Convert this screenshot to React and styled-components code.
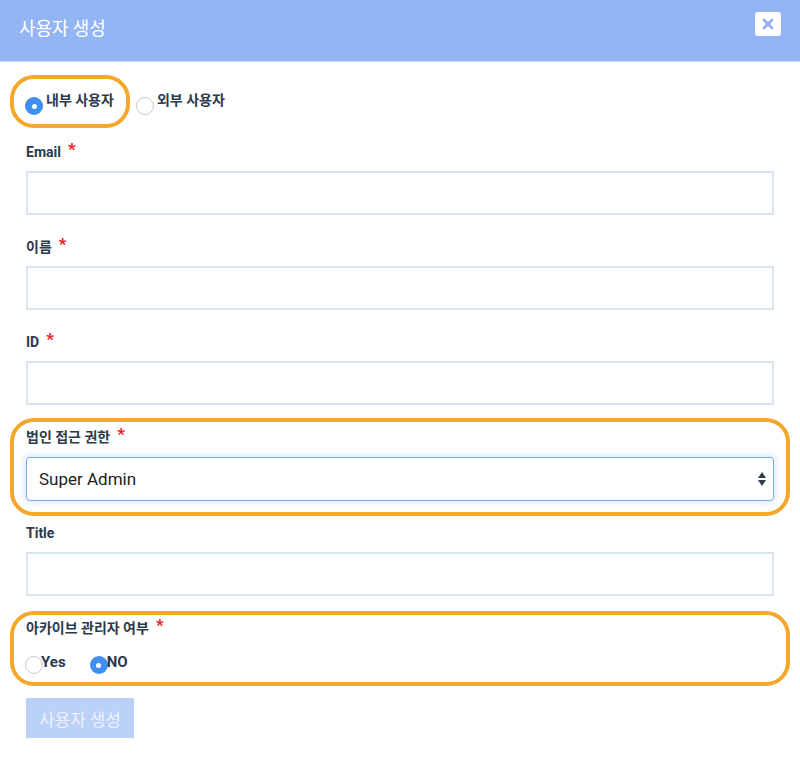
import styled, { createGlobalStyle } from "styled-components";

const Global = createGlobalStyle`
  body {
    margin: 0;
    background: #fff;
    font-family: Roboto, "Noto Sans CJK KR", sans-serif;
  }
`;

const Modal = styled.div`
  width: 800px;
  min-height: 783px;
  background: #fff;
`;

const Header = styled.div`
  height: 61px;
  background: #93b5f4;
  border-bottom: 1px solid #d3ddf0;
  display: flex;
  justify-content: space-between;
  align-items: flex-start;
  padding: 0 19px;
  box-sizing: content-box;
`;

const Title = styled.h2`
  margin: 15px 0 0;
  font-family: "Noto Sans CJK KR", sans-serif;
  font-size: 18px;
  font-weight: 400;
  color: #fff;
  line-height: 24px;
`;

const CloseButton = styled.button`
  margin-top: 12px;
  width: 26px;
  height: 24px;
  border: none;
  border-radius: 3px;
  background: #fff;
  display: flex;
  align-items: center;
  justify-content: center;
  padding: 0;
`;

const Body = styled.div`
  padding: 33px 26px 40px;
`;

const Highlight = styled.div`
  position: relative;
  &::after {
    content: "";
    position: absolute;
    top: ${(p) => p.$top}px;
    bottom: ${(p) => p.$bottom}px;
    left: -16px;
    right: -16px;
    border: 4px solid #f5a72a;
    border-radius: 24px;
    pointer-events: none;
  }
`;

const RadioRow = styled.div`
  display: flex;
  align-items: center;
  gap: ${(p) => p.$gap}px;
  margin-bottom: ${(p) => p.$mb || 0}px;
`;

const RadioItem = styled.label`
  display: flex;
  align-items: center;
  gap: ${(p) => p.$gap || 0}px;
  font-family: Roboto, "Noto Sans CJK KR", sans-serif;
  font-size: ${(p) => p.$size || 14}px;
  font-weight: 700;
  color: #2c3a4b;
  line-height: 18px;
`;

const RadioText = styled.span`
  position: relative;
  top: ${(p) => p.$lift || 0}px;
  margin-left: ${(p) => p.$ml || 0}px;
`;

const RadioDot = styled.span`
  width: 18px;
  height: 18px;
  border-radius: 50%;
  box-sizing: border-box;
  flex: none;
  position: relative;
  top: ${(p) => p.$drop || 0}px;
  background: ${(p) => (p.$checked ? "#3d8ff2" : "#fff")};
  border: ${(p) => (p.$checked ? "none" : "1.5px solid #c9c9c9")};
  display: flex;
  align-items: center;
  justify-content: center;
  &::after {
    content: "";
    display: ${(p) => (p.$checked ? "block" : "none")};
    width: 5px;
    height: 5px;
    border-radius: 50%;
    background: #fff;
  }
`;

const Group = styled.div`
  margin-bottom: ${(p) => (p.$mb === undefined ? 22 : p.$mb)}px;
`;

const Label = styled.div`
  font-family: Roboto, "Noto Sans CJK KR", sans-serif;
  font-size: 14px;
  font-weight: 700;
  color: #2c3a4b;
  line-height: 20px;
  margin-bottom: ${(p) => p.$mb || 9}px;
  display: flex;
  align-items: flex-start;
`;

const Required = styled.span`
  color: #f01c1c;
  font-size: 17px;
  margin-left: 7px;
  line-height: 14px;
`;

const Input = styled.input`
  display: block;
  width: 100%;
  height: 44px;
  box-sizing: border-box;
  border: 2px solid #dbe3ec;
  background: #fff;
  outline: none;
`;

const SelectBox = styled.div`
  height: 44px;
  box-sizing: border-box;
  border: 1px solid #70a9ec;
  border-radius: 4px;
  box-shadow: 0 0 6px 2px rgba(120, 170, 240, 0.25);
  display: flex;
  align-items: center;
  justify-content: space-between;
  padding: 0 6px 0 12px;
  font-family: Roboto, sans-serif;
  font-size: 17px;
  color: #222;
`;

const SubmitButton = styled.button`
  width: 108px;
  height: 40px;
  border: none;
  background: #bcd1f7;
  color: #eef3fe;
  font-family: "Noto Sans CJK KR", sans-serif;
  font-size: 17px;
  padding: 0;
`;

function Field({ label, required, mb }) {
  return (
    <Group $mb={mb}>
      <Label>
        {label}
        {required && <Required>*</Required>}
      </Label>
      <Input />
    </Group>
  );
}

export default function App() {
  return (
    <Modal>
      <Global />
      <Header>
        <Title>사용자 생성</Title>
        <CloseButton>
          <svg width="12" height="12" viewBox="0 0 12 12">
            <path d="M2 2L10 10M10 2L2 10" stroke="#8fb0ef" strokeWidth="2.6" strokeLinecap="round" />
          </svg>
        </CloseButton>
      </Header>
      <Body>
        <RadioRow $gap={22} $mb={29}>
          <Highlight $top={-20} $bottom={-15}>
            <RadioItem $gap={3}>
              <RadioDot $checked $drop={2} style={{ marginLeft: -1 }} />
              <RadioText $lift={-4}>내부 사용자</RadioText>
            </RadioItem>
          </Highlight>
          <RadioItem $gap={3}>
            <RadioDot $drop={2} />
            <RadioText $lift={-4}>외부 사용자</RadioText>
          </RadioItem>
        </RadioRow>

        <Field label="Email" required />
        <Field label="이름" required />
        <Field label="ID" required />

        <Highlight $top={-9} $bottom={-15}>
          <Group>
            <Label $mb={10}>
              법인 접근 권한
              <Required>*</Required>
            </Label>
            <SelectBox>
              Super Admin
              <svg width="10" height="16" viewBox="0 0 10 16">
                <path d="M5 1L9 7H1Z" fill="#2c3a4b" />
                <path d="M5 15L9 9H1Z" fill="#2c3a4b" />
              </svg>
            </SelectBox>
          </Group>
        </Highlight>

        <Field label="Title" />

        <Highlight $top={-7} $bottom={-15}>
          <Group $mb={27}>
            <Label $mb={15}>
              아카이브 관리자 여부
              <Required>*</Required>
            </Label>
            <RadioRow $gap={24}>
              <RadioItem $size={15} style={{ marginLeft: -1 }}>
                <RadioDot $drop={3} />
                <RadioText $ml={-2}>Yes</RadioText>
              </RadioItem>
              <RadioItem $size={15}>
                <RadioDot $checked $drop={3} />
                <RadioText $ml={-1}>NO</RadioText>
              </RadioItem>
            </RadioRow>
          </Group>
        </Highlight>

        <SubmitButton>사용자 생성</SubmitButton>
      </Body>
    </Modal>
  );
}
